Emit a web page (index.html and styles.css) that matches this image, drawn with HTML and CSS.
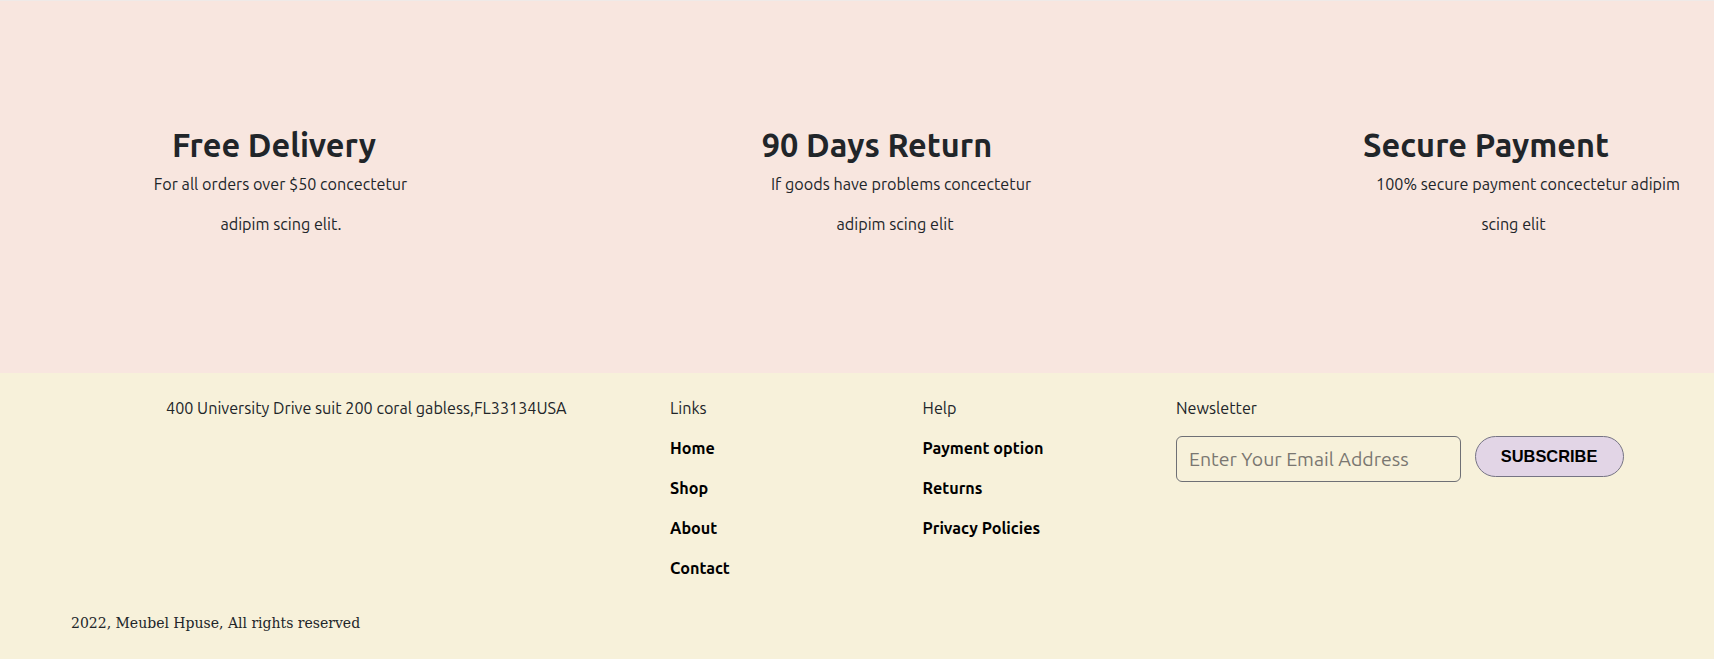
FILE: index.html
```html
<!DOCTYPE html>
<html lang="en">
<head>
<meta charset="utf-8">
<title>Meubel House</title>
<link rel="stylesheet" href="styles.css">
</head>
<body>
<section class="features">
  <div class="feature feature-1">
    <h2 class="feature-title">Free Delivery</h2>
    <p class="feature-line shift-13">For all orders over $50 concectetur</p>
    <p class="feature-line shift-14">adipim scing elit.</p>
  </div>
  <div class="feature feature-2">
    <h2 class="feature-title">90 Days Return</h2>
    <p class="feature-line shift-48">If goods have problems concectetur</p>
    <p class="feature-line shift-36">adipim scing elit</p>
  </div>
  <div class="feature feature-3">
    <h2 class="feature-title">Secure Payment</h2>
    <p class="feature-line shift-84">100% secure payment concectetur adipim</p>
    <p class="feature-line shift-55">scing elit</p>
  </div>
</section>
<footer class="footer">
  <div class="footer-row">
    <div class="footer-col col-address">
      <p class="footer-text">400 University Drive suit 200 coral gabless,FL33134USA</p>
    </div>
    <div class="footer-col col-links">
      <p class="footer-title">Links</p>
      <p class="footer-link">Home</p>
      <p class="footer-link">Shop</p>
      <p class="footer-link">About</p>
      <p class="footer-link">Contact</p>
    </div>
    <div class="footer-col col-help">
      <p class="footer-title">Help</p>
      <p class="footer-link">Payment option</p>
      <p class="footer-link">Returns</p>
      <p class="footer-link">Privacy Policies</p>
    </div>
    <div class="footer-col col-news">
      <p class="footer-title">Newsletter</p>
      <form class="news-form">
        <input class="news-input" type="email" placeholder="Enter Your Email Address">
        <button class="news-button" type="button">SUBSCRIBE</button>
      </form>
    </div>
  </div>
  <p class="copyright">2022, Meubel Hpuse, All rights reserved</p>
</footer>
</body>
</html>
```
FILE: styles.css
```css
* { box-sizing: border-box; }
html, body { margin: 0; padding: 0; }
body {
  background: #f7f1da;
  color: #212529;
  font-family: "Ubuntu", "Open Sans", "Liberation Sans", sans-serif;
  font-size: 16.2px;
  line-height: 24px;
  overflow: hidden;
}
p { margin: 0 0 16px; }

.features {
  display: flex;
  height: 373px;
  padding: 125px 0 0 74px;
  gap: 203px;
  background: #f8e6df;
  border-top: 1px solid #efeae8;
}
.feature {
  width: 400px;
  flex: none;
  text-align: center;
}
.feature-3 { margin-left: 6px; }
.feature-title {
  margin: 0 0 8px;
  font-size: 32.5px;
  line-height: 38.4px;
  font-weight: 700;
  color: #212529;
}
.feature-line { white-space: nowrap; }
.shift-13 { padding-left: 13px; }
.shift-14 { padding-left: 14px; }
.shift-48 { padding-left: 48px; }
.shift-36 { padding-left: 36px; }
.shift-84 { padding-left: 84px; }
.shift-55 { padding-left: 55px; }

.footer {
  padding: 23px 0 0;
  background: #f7f1da;
}
.footer-row {
  display: flex;
  padding-left: 166px;
}
.footer-col { flex: none; }
.col-address { width: 504px; }
.col-links { width: 252.6px; }
.col-help { width: 253.4px; }
.col-news { flex: 1; }
.footer-text, .footer-title { color: #212529; white-space: nowrap; }
.footer-link {
  font-weight: 700;
  color: #000;
  white-space: nowrap;
}
.news-form {
  display: flex;
  align-items: flex-start;
  gap: 13.6px;
  margin-top: 3px;
}
.news-input {
  width: 285px;
  height: 46px;
  padding: 0 12px;
  border: 1px solid #6f7075;
  border-radius: 6px;
  background: transparent;
  font-family: "Ubuntu", "Open Sans", sans-serif;
  font-size: 19.5px;
  color: #212529;
}
.news-input::placeholder { color: #7a7771; }
.news-button {
  width: 149px;
  height: 41px;
  padding: 0;
  border: 1px solid #767484;
  border-radius: 21px;
  background: #e2d5e6;
  font-family: "Liberation Sans", Arial, sans-serif;
  font-size: 16.4px;
  font-weight: 700;
  color: #000;
}
.copyright {
  margin: 17px 0 0;
  padding-left: 71px;
  font-family: "DejaVu Serif", serif;
  font-size: 14px;
  line-height: 21px;
  color: #212529;
}
```
